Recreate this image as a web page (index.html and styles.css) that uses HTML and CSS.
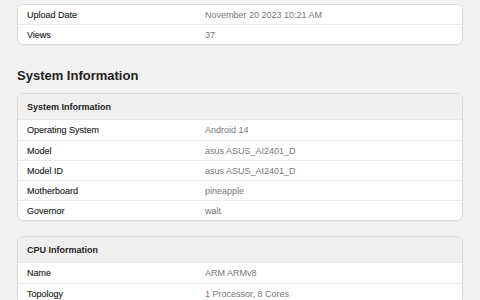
FILE: index.html
```html
<!DOCTYPE html>
<html>
<head>
<meta charset="utf-8">
<link rel="stylesheet" href="styles.css">
</head>
<body>
<div class="page">
  <div class="card">
    <div class="row"><span class="label">Upload Date</span><span class="value">November 20 2023 10:21 AM</span></div>
    <div class="row"><span class="label">Views</span><span class="value">37</span></div>
  </div>

  <h2 class="section-title">System Information</h2>
  <div class="card">
    <div class="card-head">System Information</div>
    <div class="row"><span class="label">Operating System</span><span class="value">Android 14</span></div>
    <div class="row"><span class="label">Model</span><span class="value">asus ASUS_AI2401_D</span></div>
    <div class="row"><span class="label">Model ID</span><span class="value">asus ASUS_AI2401_D</span></div>
    <div class="row"><span class="label">Motherboard</span><span class="value">pineapple</span></div>
    <div class="row"><span class="label">Governor</span><span class="value">walt</span></div>
  </div>

  <div class="card card-gap">
    <div class="card-head">CPU Information</div>
    <div class="row"><span class="label">Name</span><span class="value">ARM ARMv8</span></div>
    <div class="row"><span class="label">Topology</span><span class="value">1 Processor, 8 Cores</span></div>
  </div>
</div>
</body>
</html>
```

FILE: styles.css
```css
html, body {
  margin: 0;
  padding: 0;
  background: #f1f1f1;
  font-family: "Liberation Sans", Arial, sans-serif;
  font-size: 9px;
}
.page {
  padding: 4px 17px 0 17px;
}
.card {
  background: #ffffff;
  border: 1px solid #dcdcdc;
  border-radius: 6px;
  overflow: hidden;
  box-shadow: 0 1px 1px rgba(0,0,0,0.04);
}
.card-gap {
  margin-top: 15px;
}
.card-head {
  height: 25px;
  display: flex;
  align-items: center;
  padding: 0 9px;
  background: #efefef;
  font-weight: bold;
  color: #222;
  border-bottom: 1px solid #e6e6e6;
}
.row {
  display: grid;
  grid-template-columns: 178px 1fr;
  align-items: center;
  height: 20px;
  padding: 0 9px;
  box-sizing: border-box;
  border-top: 1px solid #ebebeb;
}
.card > .row:first-child {
  border-top: none;
  height: 19px;
}
.card-head + .row {
  border-top: none;
  height: 20px;
}
.label {
  color: #262626;
  -webkit-text-stroke: 0.15px #262626;
}
.value {
  color: #777777;
}
.section-title {
  margin: 23px 0 9px 0;
  font-size: 13px;
  line-height: 16px;
  font-weight: bold;
  color: #222;
}
```
